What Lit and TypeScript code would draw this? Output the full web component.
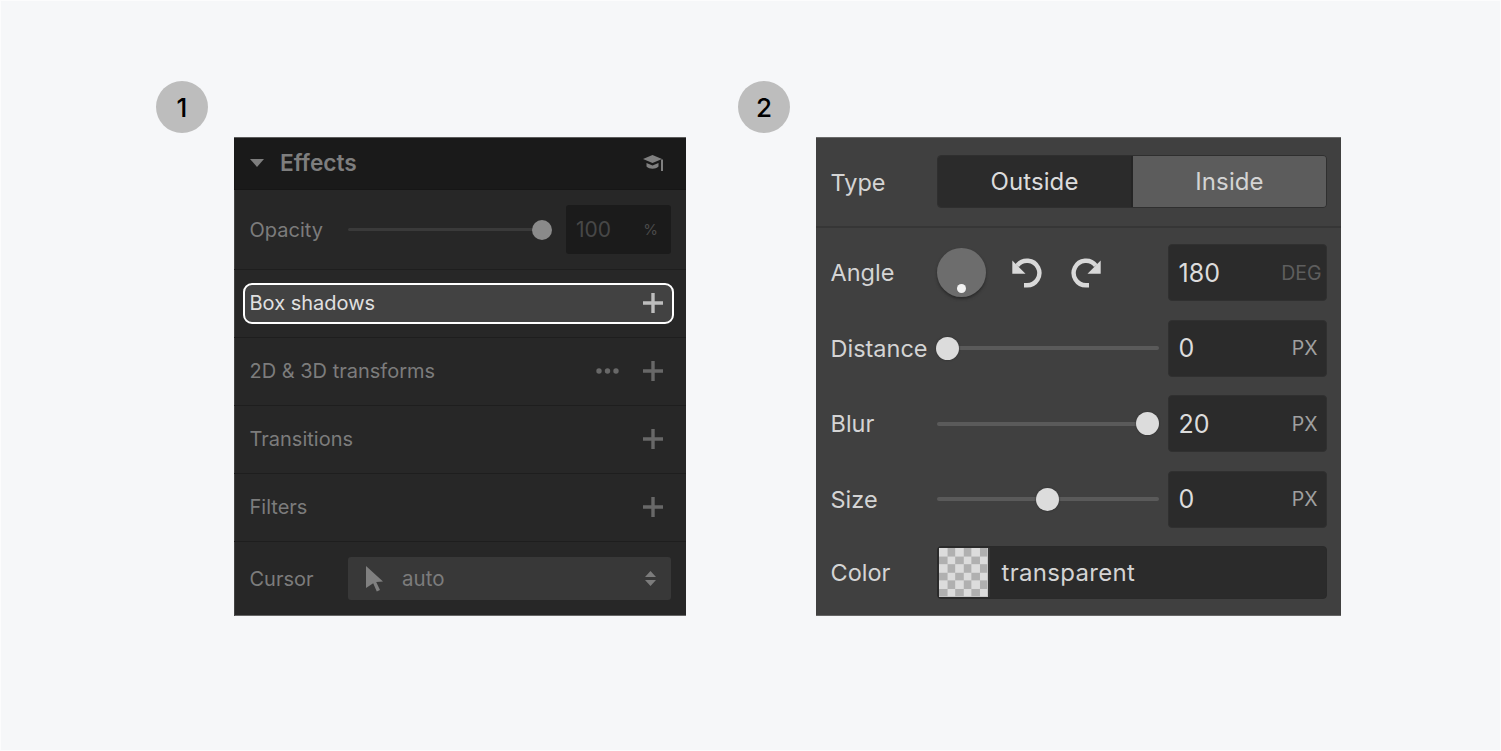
import { LitElement, html, css, svg } from "lit";
import { customElement } from "lit/decorators.js";

const plus = html`<svg class="plus" viewBox="0 0 20 20"><path d="M8.300 0h3.400v8.300H20v3.400h-8.300V20H8.300v-8.300H0V8.300h8.300z" fill="currentColor"/></svg>`;
const rot = svg`<path d="M13 27.300H16A12.300 12.300 0 1 0 6.200 7.600"></path><path class="ah" d="M1.300 2.500V15.800H14.500z"></path>`;

@customElement("app-root")
export class AppRoot extends LitElement {
  static styles = css`
    :host { display: block; width: 1501px; height: 751px; font-family: Inter, "Noto Sans", sans-serif; overflow: hidden; }
    .page { display: flex; padding: 80px 0 0 155px; box-sizing: border-box; height: 751px; background: #f6f7f9; border: 1px solid #fcfcfd; }
    .col1 { width: 582px; flex: none; }
    .col2 { flex: none; }
    .badge { width: 52px; height: 52px; border-radius: 50%; background: #bdbdbd; color: #000; display: flex; align-items: center; justify-content: center; font-size: 26px; font-weight: 500; }
    .panel { margin: 4px 0 0 78px; height: 479px; box-sizing: border-box; }
    .p1 { width: 452px; background: #272727; display: flex; flex-direction: column; color: #7c7c7c; font-size: 20px; border-top: 1px solid #5c5c5c; box-shadow: inset 1px 0 #444, inset 0 -1px #666; }
    .head { height: 52px; flex: none; background: #1a1a1a; display: flex; align-items: center; padding: 0 23.5px 2px 15.5px; border-bottom: 1px solid #161616; box-sizing: border-box; color: #7e7e7e; font-weight: 600; font-size: 22.7px; }
    .head .tri { width: 14px; height: 8px; margin-right: 16px; margin-left: 0.5px; }
    .head .title { flex: 1; }
    .cap { width: 20px; height: 16px; }
    .row { display: flex; align-items: center; padding: 0 23.5px 2px 15.5px; height: 68px; flex: none; border-bottom: 1px solid #1e1e1e; box-sizing: border-box; }
    .r-op { height: 80px; padding: 0 15px 0 15.5px; }
    .track { height: 3px; background: #3a3a3a; border-radius: 2px; position: relative; flex: 1; margin: 0 24px 0 25px; }
    .op-knob { position: absolute; right: -10px; top: -8.5px; width: 20px; height: 20px; border-radius: 50%; background: #8a8a8a; }
    .op-input { width: 105px; height: 49px; flex: none; background: #1b1b1b; border-radius: 3px; display: flex; align-items: center; justify-content: space-between; padding: 0 13px 0 10px; box-sizing: border-box; color: #474747; font-size: 21px; }
    .op-input small { font-size: 15px; color: #4a4a4a; }
    .label { flex: 1; }
    .plus { width: 20px; height: 20px; color: #686868; flex: none; }
    .r-box { padding: 0 12px 0 9px; }
    .boxed { flex: 1; height: 41px; border: 2px solid #fff; border-radius: 9px; background: #424242; display: flex; align-items: center; padding: 0 9.5px 1px 4.5px; color: #e0e0e0; box-sizing: border-box; }
    .boxed .plus { color: #bdbdbd; }
    .dots { width: 23px; height: 6px; margin-right: 23.5px; }
    .r-cur { flex: 1; border: none; height: auto; padding: 0 15.5px 1px 15.5px; }
    .r-cur .label { flex: none; width: 98.5px; }
    .select { flex: 1; height: 43px; background: #383838; border-radius: 3px; display: flex; align-items: center; padding: 0 15px 0 17.5px; color: #7c7c7c; font-size: 20.5px; }
    .select .val { flex: 1; }
    .arrow { width: 17px; height: 26px; margin-right: 19.500px; }
    .ud { width: 11px; height: 15px; }
    .p2 { width: 525px; background: #404040; color: #d4d4d4; font-size: 23.5px; border-top: 1px solid #6a6a6a; display: flex; flex-direction: column; padding: 0 14px 0 14.5px; box-shadow: inset 0 -1px #666; }
    .type { height: 90px; flex: none; display: flex; align-items: center; margin: 0 -14px 0 -14.5px; padding: 0 14px 0 14.5px; border-bottom: 2.5px solid #363636; box-sizing: border-box; }
    .lab { width: 106.5px; flex: none; }
    .seg { flex: 1; display: flex; height: 53px; margin-top: -2px; border-radius: 4px; overflow: hidden; border: 1px solid #2f2f2f; box-sizing: border-box; font-size: 24px; }
    .seg div { flex: 1; display: flex; align-items: center; justify-content: center; letter-spacing: 0.1px; }
    .seg .a { background: #2b2b2b; color: #dcdcdc; border-right: 2px solid #252525; }
    .seg .b { background: #5c5c5c; color: #d4d4d4; }
    .r2 { display: flex; align-items: center; height: 57px; flex: none; margin-bottom: 18.5px; }
    .angle { margin-top: 16px; }
    .dial { width: 49px; height: 49px; border-radius: 50%; background: #6d6d6d; box-shadow: 0 2px 3px #2a2a2a; position: relative; flex: none; }
    .dial i { position: absolute; width: 9px; height: 9px; border-radius: 50%; background: #f2f2f2; left: 20px; bottom: 4.5px; }
    .rot { width: 32px; height: 30px; flex: none; }
    .rot path { fill: none; stroke: #d9d9d9; stroke-width: 4.4; }
    .rot path.ah { fill: #d9d9d9; stroke: none; }
    .rot.l { margin-left: 25px; }
    .rot.r { margin-left: 27px; transform: scaleX(-1); }
    .spacer { flex: 1; }
    .num { width: 159.5px; height: 57px; flex: none; margin-left: 9px; background: #2b2b2b; border: 1px solid #303030; border-radius: 4px; box-sizing: border-box; display: flex; align-items: center; justify-content: space-between; padding: 0 8.5px 0 10px; color: #dcdcdc; font-size: 25px; }
    .num small { font-size: 19.5px; color: #a0a0a0; }
    .num small.dim { color: #5e5e5e; margin-right: -4px; }
    .slide { flex: 1; height: 4px; background: #5a5a5a; border-radius: 2px; position: relative; }
    .knob { position: absolute; top: -9.5px; width: 23px; height: 23px; margin-left: -11.5px; border-radius: 50%; background: #dcdcdc; box-shadow: 0 0 2px #2a2a2a; }
    .color { height: 53px; flex: 1; display: flex; align-items: center; background: #2b2b2b; border: 1px solid #2a2a2a; border-radius: 4px; box-sizing: border-box; overflow: hidden; }
    .swatch { width: 49px; height: 49px; flex: none; margin-left: 1px; background-color: #dcdcdc; background-image: conic-gradient(#b0b0b0 25%, #dcdcdc 0 50%, #b0b0b0 0 75%, #dcdcdc 0); background-size: 16.2px 16.2px; border-right: 2px solid #363636; margin-right: 11.5px; }
    .colorrow { height: 53px; margin-bottom: 0; margin-top: -0.5px; }
    .tr { letter-spacing: 0.3px; font-size: 24px; }
  `;

  slider(label: string, pos: number, val: string) {
    return html`<div class="r2"><div class="lab">${label}</div>
      <div class="slide"><div class="knob" style="left:${pos}px"></div></div>
      <div class="num"><span>${val}</span><small>PX</small></div></div>`;
  }

  render() {
    return html`<div class="page">
      <div class="col1">
        <div class="badge">1</div>
        <div class="panel p1">
          <div class="head">
            <svg class="tri" viewBox="0 0 14 8"><path d="M0 0h14L7 8z" fill="#7e7e7e"/></svg>
            <span class="title">Effects</span>
            <svg class="cap" viewBox="0 0 20 16"><path d="M0 4L9.500 0 19 4 9.500 8z" fill="#808080"/><path d="M3.500 8l6 2.500 6-2.500v3.500c-3 3-9 3-12 0z" fill="#808080"/><rect x="18" y="4.500" width="2" height="11.500" fill="#808080"/></svg>
          </div>
          <div class="row r-op"><span>Opacity</span>
            <div class="track"><div class="op-knob"></div></div>
            <div class="op-input"><span>100</span><small>%</small></div>
          </div>
          <div class="row r-box"><div class="boxed"><span class="label">Box shadows</span>${plus}</div></div>
          <div class="row"><span class="label">2D &amp; 3D transforms</span>
            <svg class="dots" viewBox="0 0 23 6"><circle cx="3" cy="3" r="2.700" fill="#686868"/><circle cx="11.500" cy="3" r="2.700" fill="#686868"/><circle cx="20" cy="3" r="2.700" fill="#686868"/></svg>${plus}</div>
          <div class="row"><span class="label">Transitions</span>${plus}</div>
          <div class="row"><span class="label">Filters</span>${plus}</div>
          <div class="row r-cur"><span class="label">Cursor</span>
            <div class="select">
              <svg class="arrow" viewBox="0 0 17 26"><path d="M0 0l17 15.500-6.800.5 3.800 8-3.200 1.500-3.600-8.200L0 22z" fill="#808080"/></svg>
              <span class="val">auto</span>
              <svg class="ud" viewBox="0 0 11 15"><path d="M5.500 0L11 6H0zM0 9h11l-5.500 6z" fill="#7c7c7c"/></svg>
            </div>
          </div>
        </div>
      </div>
      <div class="col2">
        <div class="badge">2</div>
        <div class="panel p2">
          <div class="type"><div class="lab">Type</div>
            <div class="seg"><div class="a">Outside</div><div class="b">Inside</div></div>
          </div>
          <div class="r2 angle"><div class="lab">Angle</div>
            <div class="dial"><i></i></div>
            <svg class="rot l" viewBox="0 0 32 30">${rot}</svg>
            <svg class="rot r" viewBox="0 0 32 30">${rot}</svg>
            <div class="spacer"></div>
            <div class="num"><span>180</span><small class="dim">DEG</small></div>
          </div>
          ${this.slider("Distance", 10.5, "0")}
          ${this.slider("Blur", 210, "20")}
          ${this.slider("Size", 110, "0")}
          <div class="r2 colorrow"><div class="lab">Color</div>
            <div class="color"><div class="swatch"></div><span class="tr">transparent</span></div>
          </div>
        </div>
      </div>
    </div>`;
  }
}
